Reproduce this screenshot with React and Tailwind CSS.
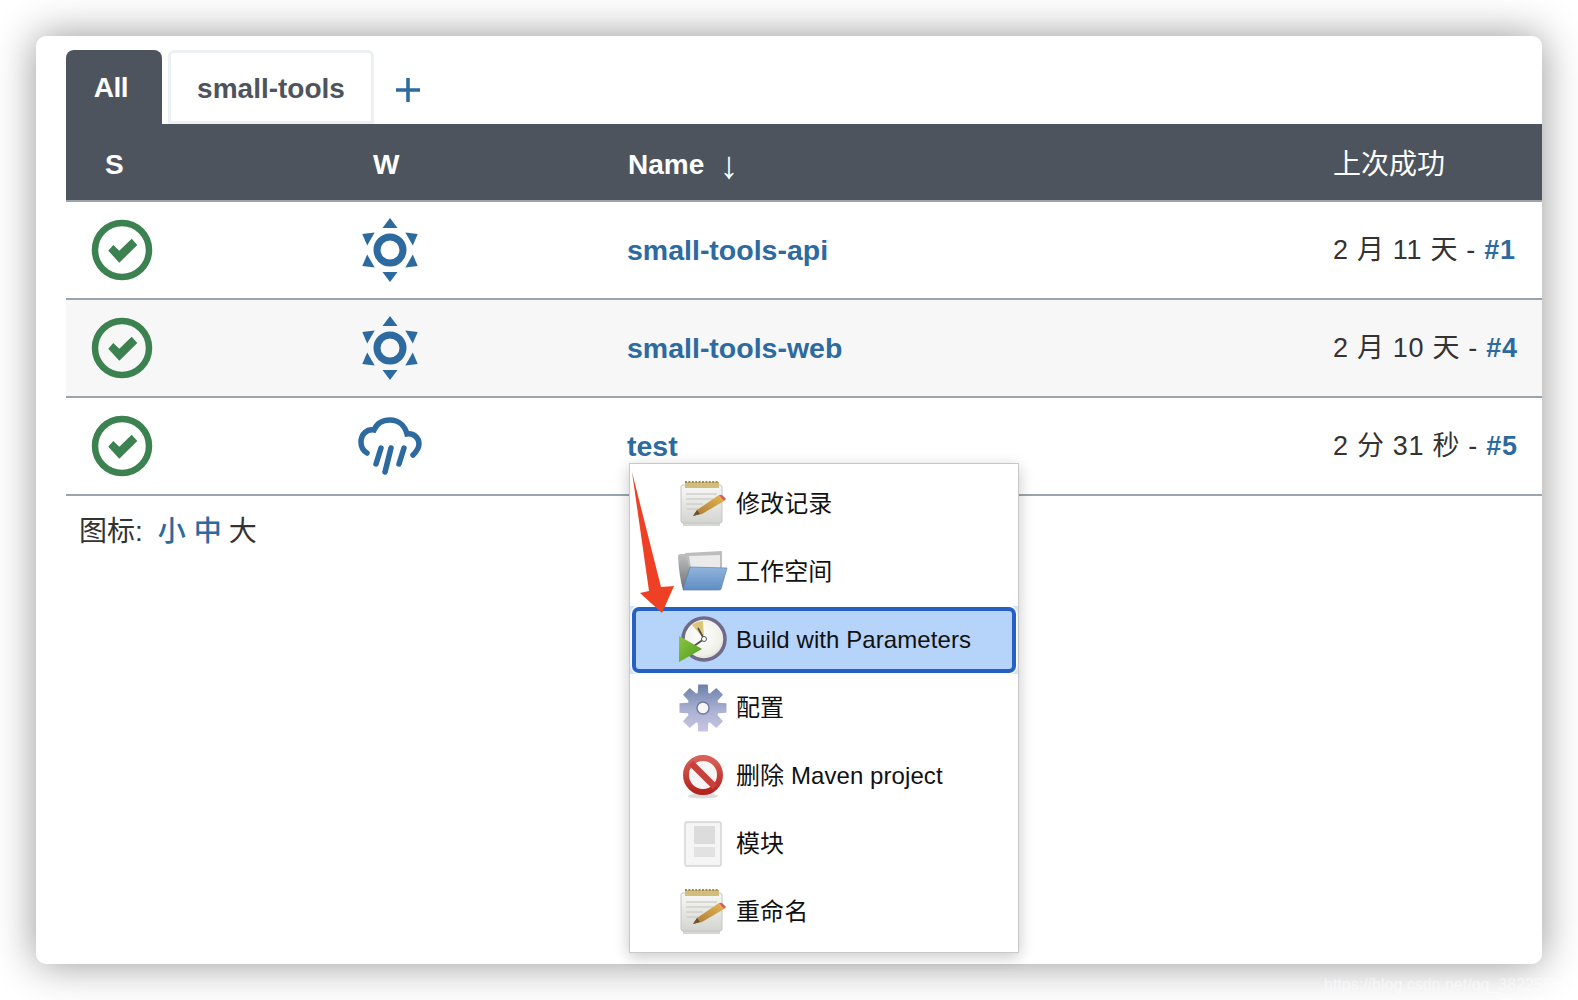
import React from 'react';

const rows = [
  { name: 'small-tools-api', last: '2 月 11 天 - ', build: '#1', weather: 'sun' },
  { name: 'small-tools-web', last: '2 月 10 天 - ', build: '#4', weather: 'sun', striped: true },
  { name: 'test', last: '2 分 31 秒 - ', build: '#5', weather: 'rain' },
];

function StatusIcon() {
  return (
    <svg width="62" height="62" viewBox="0 0 62 62" className="block">
      <circle cx="31" cy="31" r="27" fill="none" stroke="#3b8250" strokeWidth="6.5" />
      <polygon points="22.3,26 17.3,31.7 28.3,43.7 46.3,26 40.7,19.7 28.3,31.7" fill="#3b8250" />
    </svg>
  );
}

function SunIcon() {
  return (
    <svg width="56" height="64" viewBox="0 0 56 64" className="block">
      <circle cx="28" cy="32" r="13" fill="none" stroke="#2c6aa0" strokeWidth="7" />
      <g fill="#2c6aa0">
        {[0, 60, 120, 180, 240, 300].map((deg) => (
          <polygon key={deg} points="28,0 20.5,10 35.5,10" transform={`rotate(${deg} 28 32)`} />
        ))}
      </g>
    </svg>
  );
}

function RainIcon() {
  return (
    <svg width="64" height="58" viewBox="0 0 64 58" className="block" fill="none" stroke="#2c6aa0" strokeWidth="5.5" strokeLinecap="round">
      <path d="M9 36 C4 33 3 28 3 25 C3 17 9 12 16 13 C19 6 25 3 32 3 C41 3 47 9 49 17 C56 16 61 21 61 27 C61 32 58 35 55 38" />
      <path d="M23 31 L18 47" />
      <path d="M33 31 L27 55" />
      <path d="M46 31 L41 47" />
    </svg>
  );
}

function NotepadIcon() {
  return (
    <svg width="48" height="48" viewBox="0 0 48 48" className="block">
      <defs>
        <linearGradient id="padBody" x1="0" y1="0" x2="0" y2="1">
          <stop offset="0" stopColor="#f8f8f6" />
          <stop offset="1" stopColor="#d4d4d0" />
        </linearGradient>
        <linearGradient id="pencil" x1="0" y1="1" x2="1" y2="0">
          <stop offset="0" stopColor="#a87a3a" />
          <stop offset="1" stopColor="#e8b64c" />
        </linearGradient>
      </defs>
      <rect x="2" y="5" width="41" height="38" rx="2" fill="url(#padBody)" stroke="#c4c4c0" />
      <rect x="6" y="2" width="34" height="6" fill="#d2bd7c" />
      <path d="M6 2 h34" stroke="#a08c50" strokeWidth="2" strokeDasharray="2 1.4" />
      <g stroke="#cdcdc9" strokeWidth="1.4">
        <path d="M7 14 H38" />
        <path d="M7 19 H34" />
        <path d="M7 24 H24" />
        <path d="M7 29 H19" />
      </g>
      <polygon points="14,36 18,30 40,15 45,21 23,34" fill="url(#pencil)" />
      <polygon points="14,36 18,30 21,34" fill="#6b5330" />
      <polygon points="40,15 43,15 47,19 45,21" fill="#d9584f" />
      <rect x="4" y="43" width="37" height="3" fill="#bcbcb8" opacity="0.6" />
    </svg>
  );
}

function FolderIcon() {
  return (
    <svg width="50" height="42" viewBox="0 0 50 42" className="block">
      <defs>
        <linearGradient id="folderBack" x1="0" y1="0" x2="0" y2="1">
          <stop offset="0" stopColor="#c0c0c0" />
          <stop offset="1" stopColor="#6a7074" />
        </linearGradient>
        <linearGradient id="folderFront" x1="0" y1="0" x2="0" y2="1">
          <stop offset="0" stopColor="#92b4dc" />
          <stop offset="1" stopColor="#5f8dc4" />
        </linearGradient>
      </defs>
      <path d="M0 5 Q0 3 3 3 L12 3 L12 38 L5 39 Q1 25 0 5 Z" fill="url(#folderBack)" />
      <path d="M7 2 L44 0 L44 18 L12 18 Z" fill="#bdbdbd" />
      <path d="M11 5 L42 4 L42 17 L13 17 Z" fill="#ebebeb" />
      <path d="M12 16 L49 17 L43 38 Q43 39 41 39 L5 39 Z" fill="url(#folderFront)" stroke="#5a82b2" strokeWidth="0.7" />
    </svg>
  );
}

function ClockIcon() {
  return (
    <svg width="48" height="50" viewBox="0 0 48 50" className="block">
      <defs>
        <radialGradient id="clockFace" cx="0.45" cy="0.4" r="0.7">
          <stop offset="0" stopColor="#ffffff" />
          <stop offset="0.7" stopColor="#efefe9" />
          <stop offset="1" stopColor="#c4c4bc" />
        </radialGradient>
        <linearGradient id="playGreen" x1="0" y1="0" x2="1" y2="1">
          <stop offset="0" stopColor="#8dc63f" />
          <stop offset="1" stopColor="#4f9a1f" />
        </linearGradient>
      </defs>
      <circle cx="25" cy="24" r="21" fill="url(#clockFace)" stroke="#6f6a88" strokeWidth="3.5" />
      <path d="M25 24 L13 10 Q18 6 24 6 Z" fill="#d9c77a" />
      <path d="M25 24 L19 13 M25 24 L15 31" stroke="#4a4a4a" strokeWidth="1.6" />
      <circle cx="25" cy="24" r="2.5" fill="#fff" stroke="#555" />
      <polygon points="0,21 23,34 0,47" fill="url(#playGreen)" />
    </svg>
  );
}

function GearIcon() {
  const teeth = 8;
  let d = '';
  for (let i = 0; i < teeth; i++) {
    const a = (i / teeth) * Math.PI * 2 - Math.PI / 2;
    const w = 0.2;
    const pts = [
      [16, a - 0.34],
      [24, a - w],
      [24, a + w],
      [16, a + 0.34],
    ];
    pts.forEach(([r, t], j) => {
      d += `${i === 0 && j === 0 ? 'M' : 'L'}${(24 + r * Math.cos(t)).toFixed(1)} ${(24 + r * Math.sin(t)).toFixed(1)} `;
    });
  }
  return (
    <svg width="48" height="48" viewBox="0 0 48 48" className="block">
      <defs>
        <linearGradient id="gearFill" x1="0" y1="0" x2="0" y2="1">
          <stop offset="0" stopColor="#6b80a8" />
          <stop offset="0.55" stopColor="#abb1d3" />
          <stop offset="1" stopColor="#c6c5e0" />
        </linearGradient>
      </defs>
      <path d={d + 'Z'} fill="url(#gearFill)" />
      <circle cx="24" cy="24" r="6" fill="#f7f7f7" stroke="#6c7ca0" strokeWidth="1.4" />
    </svg>
  );
}

function NoIcon() {
  return (
    <svg width="44" height="46" viewBox="0 0 44 46" className="block">
      <defs>
        <linearGradient id="noRed" x1="0" y1="0" x2="0" y2="1">
          <stop offset="0" stopColor="#d9605a" />
          <stop offset="1" stopColor="#b5231f" />
        </linearGradient>
      </defs>
      <ellipse cx="22" cy="43" rx="15" ry="2.5" fill="#c4c4c4" opacity="0.6" />
      <circle cx="22" cy="22" r="17" fill="#f6f6f6" stroke="url(#noRed)" strokeWidth="6" />
      <path d="M10 10 L34 34" stroke="#c8403b" strokeWidth="6.5" />
    </svg>
  );
}

function DocIcon() {
  return (
    <svg width="38" height="46" viewBox="0 0 38 46" className="block">
      <rect x="1" y="1" width="36" height="44" rx="2" fill="#f5f5f5" stroke="#d2d2d2" strokeWidth="1.4" />
      <rect x="10" y="5" width="21" height="18" fill="#dcdcdc" />
      <rect x="10" y="26" width="21" height="10" fill="#e2e2e2" />
    </svg>
  );
}

const menuItems = [
  { label: '修改记录', icon: <NotepadIcon /> },
  { label: '工作空间', icon: <FolderIcon /> },
  { label: 'Build with Parameters', icon: <ClockIcon />, active: true },
  { label: '配置', icon: <GearIcon /> },
  { label: '删除 Maven project', icon: <NoIcon /> },
  { label: '模块', icon: <DocIcon /> },
  { label: '重命名', icon: <NotepadIcon /> },
];

function ContextMenu() {
  return (
    <div className="absolute left-[593px] top-[427px] z-10 w-[390px] border border-[#c8c8c8] bg-white py-[6px] shadow-[0_4px_14px_rgba(0,0,0,0.22)]">
      {menuItems.map((item) => (
        <div
          key={item.label}
          className={`relative flex h-[68px] items-center text-[24px] tracking-[0.08px] text-[#111] ${item.active ? 'bg-[#d3e4fc]' : 'bg-white'}`}
        >
          {item.active && (
            <div className="absolute inset-x-[2px] inset-y-[1px] rounded-[7px] border-4 border-[#2560c4] bg-[#b6d3f9] ring-[1.5px] ring-white" />
          )}
          <div className="relative flex w-[106px] shrink-0 items-center justify-center pl-[40px] blur-[0.4px]">{item.icon}</div>
          <span className="relative whitespace-nowrap">{item.label}</span>
        </div>
      ))}
    </div>
  );
}

function Arrow() {
  return (
    <svg width="50" height="148" viewBox="0 0 50 148" className="absolute left-[594px] top-[434px] z-20">
      <polygon points="2,2 19,121 10,123 32,143 44,116 31,117" fill="#ee4024" />
    </svg>
  );
}

export default function App() {
  return (
    <div
      className="h-[1000px] w-[1578px] overflow-hidden bg-white p-[36px] text-[#333]"
      style={{ fontFamily: '"Liberation Sans", "Noto Sans CJK SC", sans-serif' }}
    >
      <div className="relative h-[928px] w-[1506px] rounded-[10px] bg-white pl-[30px] pt-[14px] shadow-[0_0_42px_rgba(0,0,0,0.42)]">
        <div className="flex h-[74px] items-stretch">
          <div className="flex w-[96px] items-center justify-center rounded-t-lg bg-[#4d545d] pr-[6px] pt-[2px] text-[28px] font-bold tracking-[-0.5px] text-white">All</div>
          <div className="ml-[6px] flex w-[206px] items-center justify-center rounded-t-md border-[3px] border-[#edf0f3] pt-[4px] text-[28px] font-bold text-[#4d545d]">small-tools</div>
          <div className="ml-[21px] flex items-center pt-[6px]">
            <svg width="26" height="26" viewBox="0 0 26 26" className="block">
              <path d="M13 1 V25 M1 13 H25" stroke="#2c6aa0" strokeWidth="3.5" />
            </svg>
          </div>
        </div>

        <div className="grid h-[78px] grid-cols-[292px_270px_706px_208px] items-center border-b-2 border-[#9aa5ad] bg-[#4d545d] pt-[6px] text-[28px] font-bold text-white">
          <div className="pl-[39px]">S</div>
          <div className="pl-[15px]">W</div>
          <div className="flex items-center">
            Name
            <span className="ml-[15px] text-[38px] font-normal leading-none">↓</span>
          </div>
          <div className="-ml-[1px] font-normal">上次成功</div>
        </div>

        {rows.map((row) => (
          <div
            key={row.name}
            className={`grid h-[98px] grid-cols-[292px_270px_706px_208px] items-center border-b-2 border-[#9aa5ad] ${row.striped ? 'bg-[#f7f7f7]' : 'bg-white'}`}
          >
            <div className="pl-[25px]"><StatusIcon /></div>
            <div className={row.weather === 'sun' ? 'pl-[4px]' : 'pl-0'}>
              {row.weather === 'sun' ? <SunIcon /> : <RainIcon />}
            </div>
            <div className="-ml-[1px] text-[28.5px] font-bold text-[#2c6aa0]">{row.name}</div>
            <div className="-ml-[1px] whitespace-nowrap text-[27px] tracking-[0.7px]">
              {row.last}
              <span className="font-bold text-[#2c6aa0]">{row.build}</span>
            </div>
          </div>
        ))}

        <div className="pl-[13px] pt-[16px] text-[28px] leading-[40px]">
          图标:
          <span className="ml-[15px] font-medium text-[#2c6aa0]">小</span>
          <span className="ml-[8px] font-medium text-[#2c6aa0]">中</span>
          <span className="ml-[7px]">大</span>
        </div>

        <ContextMenu />
        <Arrow />
      </div>

      <div className="absolute left-[1324px] top-[973px] whitespace-nowrap text-[16px] text-white/50">https://blog.csdn.net/qq_38225559</div>
    </div>
  );
}
